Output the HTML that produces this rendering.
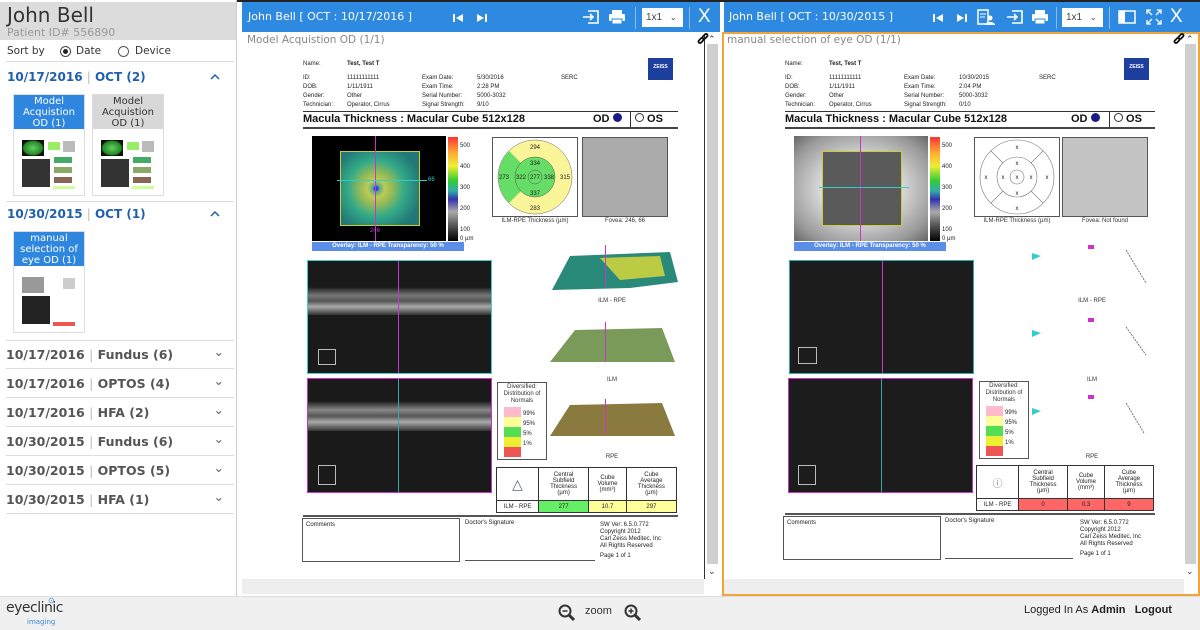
<!DOCTYPE html>
<html><head><meta charset="utf-8">
<style>
*{box-sizing:border-box;margin:0;padding:0}
body{width:1200px;height:630px;overflow:hidden;background:#fff;font-family:"Liberation Sans",sans-serif;position:relative}
.a{position:absolute}
.sb{left:0;top:0;width:237px;height:596px;border-right:1px solid #ccc;background:#fff}
.sg{font-family:"DejaVu Sans","Liberation Sans",sans-serif}
.row{position:absolute;left:6px;width:228px;height:29px;border-bottom:1px solid #ddd;font-size:12.5px;color:#555;font-weight:bold;line-height:29px}
.row .ch{position:absolute;right:10px;top:-3px;font-weight:normal;color:#666}
.th{position:absolute;width:72px;height:102px;border:1px solid #ddd;background:#fff}
.th .t{height:34px;font-size:10px;line-height:11px;text-align:center;padding-top:1px;color:#fff;background:#2e86de}
.th .t.g{background:#d8d8d8;color:#333}
.ph{top:2px;height:30px;background:#2e8ae0;color:#fff}
.rep{position:absolute;top:0;width:480px;height:596px}
.rep .x{position:absolute;font-size:6px;color:#222;white-space:nowrap;line-height:9px}
.cap{font-size:6px;color:#333;position:absolute;text-align:center}
table.tb{border-collapse:collapse;font-size:6px;text-align:center;color:#222}
table.tb td{border:1px solid #333;padding:0}
.mini{position:absolute;left:6px;top:38px;width:58px;height:60px;background:#fff}
</style></head><body>
<div class="a" style="left:0;top:0;width:1200px;height:2px;background:#222"></div>
<!-- sidebar -->
<div class="a sb">
 <div class="a" style="left:0;top:2px;width:236px;height:38px;background:#dcdcdc"></div>
 <div class="a sg" style="left:7px;top:3px;font-size:20px;color:#333">John Bell</div>
 <div class="a sg" style="left:7px;top:26px;font-size:11px;color:#999">Patient ID# 556890</div>
 <div class="a sg" style="left:7px;top:45px;font-size:10.5px;color:#333">Sort by</div>
 <div class="a" style="left:60px;top:46px;width:11px;height:11px;border:1px solid #444;border-radius:50%"><div class="a" style="left:2px;top:2px;width:5px;height:5px;background:#222;border-radius:50%"></div></div>
 <div class="a sg" style="left:76px;top:45px;font-size:10.5px;color:#333">Date</div>
 <div class="a" style="left:118px;top:46px;width:11px;height:11px;border:1px solid #555;border-radius:50%"></div>
 <div class="a sg" style="left:135px;top:45px;font-size:10.5px;color:#333">Device</div>
 <div class="a" style="left:6px;top:61px;width:228px;height:1px;background:#ddd"></div>
 <div class="a sg" style="left:7px;top:70px;font-size:12px;font-weight:bold;color:#1f5fae">10/17/2016 <span style="color:#bbb;font-weight:normal">|</span> OCT (2)</div>
 <svg class="a" style="left:210px;top:73px" width="10" height="7"><path d="M1 6l4-4 4 4" fill="none" stroke="#1f5fae" stroke-width="1.5"/></svg>
 <div class="th" style="left:13px;top:94px"><div class="t sg">Model Acquistion OD (1)</div><div class="mini"><div class="a" style="left:2px;top:7px;width:22px;height:16px;background:radial-gradient(#6c6,#282 60%,#111 70%)"></div><div class="a" style="left:28px;top:9px;width:12px;height:8px;background:#9e6"></div><div class="a" style="left:43px;top:8px;width:12px;height:11px;background:#bbb"></div><div class="a" style="left:2px;top:26px;width:28px;height:28px;background:#333"></div><div class="a" style="left:34px;top:24px;width:18px;height:6px;background:#4a6"></div><div class="a" style="left:34px;top:34px;width:18px;height:6px;background:#8a6"></div><div class="a" style="left:34px;top:44px;width:18px;height:6px;background:#865"></div><div class="a" style="left:33px;top:53px;width:22px;height:3px;background:#cf9"></div></div></div>
 <div class="th" style="left:92px;top:94px"><div class="t g sg">Model Acquistion OD (1)</div><div class="mini"><div class="a" style="left:2px;top:7px;width:22px;height:16px;background:radial-gradient(#6c6,#282 60%,#111 70%)"></div><div class="a" style="left:28px;top:9px;width:12px;height:8px;background:#9e6"></div><div class="a" style="left:43px;top:8px;width:12px;height:11px;background:#bbb"></div><div class="a" style="left:2px;top:26px;width:28px;height:28px;background:#333"></div><div class="a" style="left:34px;top:24px;width:18px;height:6px;background:#4a6"></div><div class="a" style="left:34px;top:34px;width:18px;height:6px;background:#8a6"></div><div class="a" style="left:34px;top:44px;width:18px;height:6px;background:#865"></div><div class="a" style="left:33px;top:53px;width:22px;height:3px;background:#cf9"></div></div></div>
 <div class="a" style="left:6px;top:201px;width:228px;height:1px;background:#ddd"></div>
 <div class="a sg" style="left:7px;top:207px;font-size:12px;font-weight:bold;color:#1f5fae">10/30/2015 <span style="color:#bbb;font-weight:normal">|</span> OCT (1)</div>
 <svg class="a" style="left:210px;top:210px" width="10" height="7"><path d="M1 6l4-4 4 4" fill="none" stroke="#1f5fae" stroke-width="1.5"/></svg>
 <div class="th" style="left:13px;top:231px"><div class="t sg">manual selection of eye OD (1)</div><div class="mini"><div class="a" style="left:2px;top:7px;width:22px;height:16px;background:#999"></div><div class="a" style="left:43px;top:8px;width:12px;height:11px;background:#ccc"></div><div class="a" style="left:2px;top:26px;width:28px;height:28px;background:#222"></div><div class="a" style="left:33px;top:52px;width:22px;height:4px;background:#e55"></div></div></div>
 <div class="a" style="left:6px;top:340px;width:228px;height:1px;background:#ddd"></div>
 <div class="row sg" style="top:340px">10/17/2016 <span style="color:#bbb;font-weight:normal">|</span> Fundus (6)<span class="ch">&#8964;</span></div>
 <div class="row sg" style="top:369px">10/17/2016 <span style="color:#bbb;font-weight:normal">|</span> OPTOS (4)<span class="ch">&#8964;</span></div>
 <div class="row sg" style="top:398px">10/17/2016 <span style="color:#bbb;font-weight:normal">|</span> HFA (2)<span class="ch">&#8964;</span></div>
 <div class="row sg" style="top:427px">10/30/2015 <span style="color:#bbb;font-weight:normal">|</span> Fundus (6)<span class="ch">&#8964;</span></div>
 <div class="row sg" style="top:456px">10/30/2015 <span style="color:#bbb;font-weight:normal">|</span> OPTOS (5)<span class="ch">&#8964;</span></div>
 <div class="row sg" style="top:485px">10/30/2015 <span style="color:#bbb;font-weight:normal">|</span> HFA (1)<span class="ch">&#8964;</span></div>
</div>

<!-- left panel header -->
<div class="a ph" style="left:242px;width:478px">
 <div class="a sg" style="left:6px;top:8px;font-size:11px">John Bell [ OCT : 10/17/2016 ]</div>
 <svg class="a" style="left:210px;top:11px" width="12" height="10"><rect x="1" y="1" width="2" height="8" fill="#fff"/><path d="M11 1L4 5l7 4z" fill="#fff"/></svg>
 <svg class="a" style="left:234px;top:11px" width="12" height="10"><path d="M1 1l7 4-7 4z" fill="#fff"/><rect x="9" y="1" width="2" height="8" fill="#fff"/></svg>
 <svg class="a" style="left:340px;top:7px" width="18" height="16"><path d="M6 2h10v12H6M1 8h10M8 5l3 3-3 3" fill="none" stroke="#fff" stroke-width="1.6"/></svg>
 <svg class="a" style="left:366px;top:7px" width="18" height="16"><rect x="4" y="1" width="10" height="4" fill="#fff"/><rect x="1" y="5" width="16" height="7" rx="1" fill="#fff"/><rect x="4" y="10" width="10" height="5" fill="#fff" stroke="#2e8ae0"/></svg>
 <div class="a" style="left:393px;top:5px;width:1px;height:22px;background:#8bbcec"></div>
 <div class="a" style="left:400px;top:6px;width:41px;height:19px;background:#fff;color:#444;font-size:10px;line-height:19px;padding-left:4px">1x1 <span style="font-size:8px;margin-left:5px">&#8964;</span></div>
 <div class="a" style="left:447px;top:5px;width:1px;height:22px;background:#8bbcec"></div>
 <div class="a" style="left:456px;top:4px;font-size:19px">X</div>
</div>
<!-- right panel header -->
<div class="a ph" style="left:724px;width:476px">
 <div class="a sg" style="left:5px;top:8px;font-size:11px">John Bell [ OCT : 10/30/2015 ]</div>
 <svg class="a" style="left:208px;top:11px" width="12" height="10"><rect x="1" y="1" width="2" height="8" fill="#fff"/><path d="M11 1L4 5l7 4z" fill="#fff"/></svg>
 <svg class="a" style="left:232px;top:11px" width="12" height="10"><path d="M1 1l7 4-7 4z" fill="#fff"/><rect x="9" y="1" width="2" height="8" fill="#fff"/></svg>
 <svg class="a" style="left:253px;top:7px" width="18" height="17"><path d="M1 1h10v14H1z" fill="none" stroke="#fff" stroke-width="1.5"/><path d="M3 5h6M3 8h5" stroke="#fff"/><circle cx="13" cy="9" r="2.5" fill="#fff"/><path d="M8 16c0-4 10-4 10 0z" fill="#fff"/></svg>
 <svg class="a" style="left:282px;top:7px" width="18" height="16"><path d="M6 2h10v12H6M1 8h10M8 5l3 3-3 3" fill="none" stroke="#fff" stroke-width="1.6"/></svg>
 <svg class="a" style="left:307px;top:7px" width="18" height="16"><rect x="4" y="1" width="10" height="4" fill="#fff"/><rect x="1" y="5" width="16" height="7" rx="1" fill="#fff"/><rect x="4" y="10" width="10" height="5" fill="#fff" stroke="#2e8ae0"/></svg>
 <div class="a" style="left:332px;top:5px;width:1px;height:22px;background:#8bbcec"></div>
 <div class="a" style="left:338px;top:6px;width:41px;height:19px;background:#fff;color:#444;font-size:10px;line-height:19px;padding-left:4px">1x1 <span style="font-size:8px;margin-left:5px">&#8964;</span></div>
 <div class="a" style="left:385px;top:5px;width:1px;height:22px;background:#8bbcec"></div>
 <svg class="a" style="left:394px;top:7px" width="18" height="16"><rect x="1" y="2" width="16" height="12" fill="none" stroke="#fff" stroke-width="1.5"/><rect x="1" y="2" width="6" height="12" fill="#fff"/></svg>
 <svg class="a" style="left:421px;top:6px" width="18" height="18"><path d="M2 6V2h4M12 2h4v4M16 12v4h-4M6 16H2v-4M2 2l5 5M16 2l-5 5M16 16l-5-5M2 16l5-5" fill="none" stroke="#fff" stroke-width="1.3"/></svg>
 <div class="a" style="left:446px;top:4px;font-size:19px">X</div>
</div>

<!-- left panel body -->
<div class="a" style="left:242px;top:32px;width:478px;height:564px;background:#fff"></div>
<div class="a sg" style="left:247px;top:34px;font-size:10.5px;color:#888">Model Acquistion OD (1/1)</div>
<div class="a" style="left:704px;top:34px;width:1px;height:545px;background:#333"></div>
<div class="a" style="left:707px;top:44px;width:11px;height:520px;background:#cfcfcf"></div>
<div class="a" style="left:708px;top:34px;font-size:9px;color:#333">&#8963;</div>
<div class="a" style="left:708px;top:566px;font-size:9px;color:#333">&#8964;</div>
<div class="a" style="left:242px;top:579px;width:462px;height:15px;background:#eee"></div>
<svg class="a" style="left:697px;top:33px" width="12" height="12"><g fill="none" stroke="#111" stroke-width="1.8"><rect x="1" y="6" width="6" height="3" rx="1.5" transform="rotate(-45 4 7.5)"/><rect x="5" y="2" width="6" height="3" rx="1.5" transform="rotate(-45 8 3.5)"/></g></svg>
<!-- right panel body -->
<div class="a" style="left:722px;top:32px;width:478px;height:564px;border:2px solid #f2a33a;background:#fff"></div>
<div class="a sg" style="left:727px;top:34px;font-size:10.5px;color:#888">manual selection of eye OD (1/1)</div>
<div class="a" style="left:1185px;top:44px;width:11px;height:520px;background:#cfcfcf"></div>
<div class="a" style="left:1186px;top:34px;font-size:9px;color:#333">&#8963;</div>
<div class="a" style="left:1186px;top:566px;font-size:9px;color:#333">&#8964;</div>
<div class="a" style="left:724px;top:579px;width:460px;height:15px;background:#eee"></div>
<svg class="a" style="left:1173px;top:33px" width="12" height="12"><g fill="none" stroke="#111" stroke-width="1.8"><rect x="1" y="6" width="6" height="3" rx="1.5" transform="rotate(-45 4 7.5)"/><rect x="5" y="2" width="6" height="3" rx="1.5" transform="rotate(-45 8 3.5)"/></g></svg>

<!-- left report -->
<div class="rep" style="left:242px">
 <div class="x" style="left:61px;top:60px">Name:</div><div class="x" style="left:105px;top:60px;font-weight:bold">Test, Test T</div>
 <div class="x" style="left:61px;top:74px">ID:<br>DOB:<br>Gender:<br>Technician:</div>
 <div class="x" style="left:105px;top:74px">11111111111<br>1/11/1911<br>Other<br>Operator, Cirrus</div>
 <div class="x" style="left:180px;top:74px">Exam Date:<br>Exam Time:<br>Serial Number:<br>Signal Strength:</div>
 <div class="x" style="left:235px;top:74px">5/30/2016<br>2:28 PM<br>5000-3032<br>9/10</div>
 <div class="x" style="left:319px;top:74px">SERC</div>
 <div class="a" style="left:406px;top:58px;width:25px;height:22px;background:#1d3f9e;color:#fff;font-size:5px;font-weight:bold;text-align:center;line-height:18px">ZEISS</div>
 <div class="a" style="left:61px;top:111px;width:375px;height:1px;background:#333"></div>
 <div class="a" style="left:61px;top:113px;font-size:11px;font-weight:bold;color:#111">Macula Thickness : Macular Cube 512x128</div>
 <div class="a" style="left:351px;top:113px;font-size:11px;font-weight:bold;color:#111">OD <span style="display:inline-block;width:9px;height:9px;border-radius:50%;background:#1a1a8a"></span></div>
 <div class="a" style="left:388px;top:112px;width:1px;height:15px;background:#333"></div>
 <div class="a" style="left:393px;top:113px;font-size:11px;font-weight:bold;color:#111"><span style="display:inline-block;width:9px;height:9px;border-radius:50%;border:1px solid #333"></span> OS</div>
 <div class="a" style="left:61px;top:127px;width:375px;height:2px;background:#444"></div>
 <div class="a" style="left:70px;top:136px;width:134px;height:105px;background:#000"><div class="a" style="left:28px;top:15px;width:80px;height:75px;border:1px solid #cc3;background:radial-gradient(circle at 45% 50%,#33f 3%,#5a8 6%,#bc5 15%,#9b5 28%,#3a8 50%,#277 80%)"></div><div class="a" style="left:63px;top:0;width:1px;height:105px;background:#c3c"></div><div class="a" style="left:25px;top:44px;width:90px;height:1px;background:#3cc"></div><div class="a" style="left:58px;top:92px;font-size:6px;color:#c3c">246</div><div class="a" style="left:116px;top:41px;font-size:6px;color:#3cc">66</div></div>
 <div class="a" style="left:206px;top:137px;width:10px;height:104px;background:linear-gradient(#f33,#fa3 15%,#ee3 28%,#3c3 42%,#3aa 52%,#33a 60%,#aaa 72%,#555 85%,#000)"></div>
 <div class="x" style="left:218px;top:136px;line-height:21px">500<br>400<br>300<br>200<br>100</div><div class="x" style="left:218px;top:235px">0 µm</div>
 <div class="a" style="left:70px;top:242px;width:152px;height:9px;background:#5b8ee6;color:#fff;font-size:6px;font-weight:bold;text-align:center;line-height:9px">Overlay: ILM - RPE  Transparency: 50 %</div>
 <svg class="a" style="left:250px;top:137px" width="86" height="80"><rect x=".5" y=".5" width="85" height="79" fill="#fff" stroke="#555"/><circle cx="43" cy="40" r="37" fill="#fbf59a" stroke="#666" stroke-width=".5"/><path d="M43 40L17 14A37 37 0 0 0 17 66z" fill="#6d6"/><circle cx="43" cy="40" r="20" fill="#6d6" stroke="#555" stroke-width=".5"/><circle cx="43" cy="40" r="7" fill="#6d6" stroke="#555" stroke-width=".5"/><g font-size="6" text-anchor="middle" fill="#222" font-family="Liberation Sans"><text x="43" y="12">294</text><text x="43" y="28">334</text><text x="43" y="42">277</text><text x="29" y="42">322</text><text x="57" y="42">338</text><text x="12" y="42">273</text><text x="73" y="42">315</text><text x="43" y="58">337</text><text x="43" y="73">283</text></g></svg>
 <div class="cap" style="left:250px;top:218px;width:86px">ILM-RPE Thickness (µm)</div>
 <div class="a" style="left:340px;top:137px;width:86px;height:80px;border:1px solid #555;background:#aaa"></div>
 <div class="cap" style="left:340px;top:218px;width:86px">Fovea: 246, 66</div>
 <div class="a" style="left:65px;top:260px;width:185px;height:114px;border:1px solid #4cc;background:#1a1a1a"><div class="a" style="left:0;top:26px;width:183px;height:28px;background:linear-gradient(#1a1a1a,#777 30%,#555 50%,#aaa 70%,#333)"></div><div class="a" style="left:90px;top:0;width:1px;height:112px;background:#c3c"></div><div class="a" style="left:10px;top:88px;width:18px;height:16px;border:1px solid #bbb"></div></div>
 <div class="a" style="left:65px;top:378px;width:185px;height:115px;border:1px solid #c3c;background:#1a1a1a"><div class="a" style="left:0;top:22px;width:183px;height:30px;background:linear-gradient(#1a1a1a,#888 30%,#555 50%,#aaa 70%,#333)"></div><div class="a" style="left:90px;top:0;width:1px;height:113px;background:#3aa"></div><div class="a" style="left:10px;top:86px;width:18px;height:20px;border:1px solid #bbb"></div></div>
 <svg class="a" style="left:308px;top:242px" width="130" height="210"><polygon points="20,14 120,10 128,40 80,46 2,48" fill="#2a8a7a"/><polygon points="50,16 110,14 115,34 70,38" fill="#bc4"/><polygon points="25,88 112,86 125,120 60,120 0,120" fill="#7a9a5a"/><polygon points="20,163 112,161 125,194 60,194 0,194" fill="#8a7a40"/><rect x="55" y="3" width="1" height="42" fill="#c3c"/><rect x="55" y="80" width="1" height="40" fill="#c3c"/><rect x="55" y="157" width="1" height="35" fill="#c3c"/></svg>
 <div class="cap" style="left:340px;top:298px;width:60px">ILM - RPE</div>
 <div class="cap" style="left:340px;top:377px;width:60px">ILM</div>
 <div class="cap" style="left:340px;top:454px;width:60px">RPE</div>
 <div class="a" style="left:255px;top:382px;width:50px;height:78px;border:1px solid #555"><div class="cap" style="left:0;top:1px;width:48px;line-height:7px">Diversified: Distribution of Normals</div><div class="a" style="left:6px;top:24px;width:17px;height:50px;background:linear-gradient(#fbc 20%,#ff9 20%,#ff9 40%,#5d5 40%,#5d5 60%,#ee3 60%,#ee3 80%,#e55 80%)"></div><div class="x" style="left:25px;top:26px;line-height:10px">99%<br>95%<br>5%<br>1%</div></div>
 <table class="tb a" style="left:254px;top:467px;width:181px;height:46px"><tr style="height:33px"><td style="width:42px;font-size:14px;color:#568">&#9651;</td><td>Central<br>Subfield<br>Thickness<br>(µm)</td><td>Cube<br>Volume<br>(mm³)</td><td>Cube<br>Average<br>Thickness<br>(µm)</td></tr><tr><td>ILM - RPE</td><td style="background:#6e6">277</td><td style="background:#ff9">10.7</td><td style="background:#ff9">297</td></tr></table>
 <div class="a" style="left:61px;top:515px;width:375px;height:2px;background:#555"></div>
 <div class="a" style="left:60px;top:518px;width:158px;height:44px;border:1px solid #555"><div class="x" style="left:3px;top:2px">Comments</div></div>
 <div class="x" style="left:223px;top:519px">Doctor's Signature</div>
 <div class="a" style="left:223px;top:560px;width:130px;height:1px;background:#555"></div>
 <div class="x" style="left:358px;top:522px;line-height:7px">SW Ver: 6.5.0.772<br>Copyright 2012<br>Carl Zeiss Meditec, Inc<br>All Rights Reserved</div>
 <div class="x" style="left:358px;top:552px">Page 1 of 1</div>
</div>

<!-- right report -->
<div class="rep" style="left:724px">
 <div class="x" style="left:61px;top:60px">Name:</div><div class="x" style="left:105px;top:60px;font-weight:bold">Test, Test T</div>
 <div class="x" style="left:61px;top:74px">ID:<br>DOB:<br>Gender:<br>Technician:</div>
 <div class="x" style="left:105px;top:74px">11111111111<br>1/11/1911<br>Other<br>Operator, Cirrus</div>
 <div class="x" style="left:180px;top:74px">Exam Date:<br>Exam Time:<br>Serial Number:<br>Signal Strength:</div>
 <div class="x" style="left:235px;top:74px">10/30/2015<br>2:04 PM<br>5000-3032<br>0/10</div>
 <div class="x" style="left:315px;top:74px">SERC</div>
 <div class="a" style="left:400px;top:58px;width:25px;height:22px;background:#1d3f9e;color:#fff;font-size:5px;font-weight:bold;text-align:center;line-height:18px">ZEISS</div>
 <div class="a" style="left:61px;top:111px;width:370px;height:1px;background:#333"></div>
 <div class="a" style="left:61px;top:113px;font-size:11px;font-weight:bold;color:#111">Macula Thickness : Macular Cube 512x128</div>
 <div class="a" style="left:347px;top:113px;font-size:11px;font-weight:bold;color:#111">OD <span style="display:inline-block;width:9px;height:9px;border-radius:50%;background:#1a1a8a"></span></div>
 <div class="a" style="left:385px;top:112px;width:1px;height:15px;background:#333"></div>
 <div class="a" style="left:390px;top:113px;font-size:11px;font-weight:bold;color:#111"><span style="display:inline-block;width:9px;height:9px;border-radius:50%;border:1px solid #333"></span> OS</div>
 <div class="a" style="left:61px;top:127px;width:370px;height:2px;background:#444"></div>
 <div class="a" style="left:70px;top:136px;width:134px;height:105px;background:radial-gradient(ellipse,#ddd 40%,#999 80%,#666)"><div class="a" style="left:28px;top:15px;width:80px;height:75px;border:1px solid #cc3;background:#5a5a5a"></div><div class="a" style="left:66px;top:0;width:1px;height:105px;background:#c3c"></div><div class="a" style="left:25px;top:51px;width:90px;height:1px;background:#3cc"></div></div>
 <div class="a" style="left:206px;top:137px;width:10px;height:104px;background:linear-gradient(#f33,#fa3 15%,#ee3 28%,#3c3 42%,#3aa 52%,#33a 60%,#aaa 72%,#555 85%,#000)"></div>
 <div class="x" style="left:218px;top:136px;line-height:21px">500<br>400<br>300<br>200<br>100</div><div class="x" style="left:218px;top:235px">0 µm</div>
 <div class="a" style="left:70px;top:242px;width:152px;height:9px;background:#5b8ee6;color:#fff;font-size:6px;font-weight:bold;text-align:center;line-height:9px">Overlay: ILM - RPE  Transparency: 50 %</div>
 <svg class="a" style="left:250px;top:137px" width="86" height="80"><rect x=".5" y=".5" width="85" height="79" fill="#fff" stroke="#555"/><circle cx="43" cy="40" r="37" fill="none" stroke="#777" stroke-width=".6"/><circle cx="43" cy="40" r="20" fill="none" stroke="#777" stroke-width=".6"/><circle cx="43" cy="40" r="7" fill="none" stroke="#777" stroke-width=".6"/><path d="M17 14L29 26M69 14L57 26M17 66L29 54M69 66L57 54" stroke="#777" stroke-width=".6"/><g font-size="6" text-anchor="middle" fill="#222" font-family="Liberation Sans"><text x="43" y="12">x</text><text x="43" y="28">x</text><text x="43" y="42">x</text><text x="29" y="42">x</text><text x="57" y="42">x</text><text x="12" y="42">x</text><text x="73" y="42">x</text><text x="43" y="58">x</text><text x="43" y="73">x</text></g></svg>
 <div class="cap" style="left:250px;top:218px;width:86px">ILM-RPE Thickness (µm)</div>
 <div class="a" style="left:338px;top:137px;width:86px;height:80px;border:1px solid #555;background:#c4c4c4"></div>
 <div class="cap" style="left:338px;top:218px;width:86px">Fovea: Not found</div>
 <div class="a" style="left:65px;top:260px;width:185px;height:114px;border:1px solid #3aa;background:#1c1c1c"><div class="a" style="left:92px;top:0;width:1px;height:112px;background:#c3c"></div><div class="a" style="left:8px;top:86px;width:19px;height:17px;border:1px solid #bbb"></div></div>
 <div class="a" style="left:64px;top:378px;width:185px;height:115px;border:1px solid #c3c;background:#1c1c1c"><div class="a" style="left:92px;top:0;width:1px;height:113px;background:#3aa"></div><div class="a" style="left:9px;top:86px;width:18px;height:20px;border:1px solid #bbb"></div></div>
 <svg class="a" style="left:300px;top:245px" width="140" height="200"><g fill="#3cc"><polygon points="8,8 17,11 8,15"/><polygon points="8,85 17,88 8,92"/><polygon points="8,163 17,166 8,170"/></g><g fill="#c3c"><rect x="64" y="0" width="6" height="4"/><rect x="64" y="73" width="6" height="4"/><rect x="64" y="150" width="6" height="4"/></g><g stroke="#555" stroke-width=".8" stroke-dasharray="2 1"><path d="M102 5L122 38M102 82L122 110M102 158L120 188"/></g></svg>
 <div class="cap" style="left:338px;top:298px;width:60px">ILM - RPE</div>
 <div class="cap" style="left:338px;top:377px;width:60px">ILM</div>
 <div class="cap" style="left:338px;top:454px;width:60px">RPE</div>
 <div class="a" style="left:255px;top:381px;width:50px;height:78px;border:1px solid #555"><div class="cap" style="left:0;top:1px;width:48px;line-height:7px">Diversified: Distribution of Normals</div><div class="a" style="left:6px;top:24px;width:17px;height:50px;background:linear-gradient(#fbc 20%,#ff9 20%,#ff9 40%,#5d5 40%,#5d5 60%,#ee3 60%,#ee3 80%,#e55 80%)"></div><div class="x" style="left:25px;top:26px;line-height:10px">99%<br>95%<br>5%<br>1%</div></div>
 <table class="tb a" style="left:252px;top:465px;width:178px;height:46px"><tr style="height:33px"><td style="width:42px;font-size:10px;color:#777">&#9432;</td><td>Central<br>Subfield<br>Thickness<br>(µm)</td><td>Cube<br>Volume<br>(mm³)</td><td>Cube<br>Average<br>Thickness<br>(µm)</td></tr><tr><td>ILM - RPE</td><td style="background:#f66">0</td><td style="background:#f66">0.3</td><td style="background:#f66">9</td></tr></table>
 <div class="a" style="left:61px;top:513px;width:370px;height:2px;background:#555"></div>
 <div class="a" style="left:59px;top:516px;width:158px;height:44px;border:1px solid #555"><div class="x" style="left:3px;top:2px">Comments</div></div>
 <div class="x" style="left:221px;top:517px">Doctor's Signature</div>
 <div class="a" style="left:221px;top:558px;width:128px;height:1px;background:#555"></div>
 <div class="x" style="left:356px;top:520px;line-height:7px">SW Ver: 6.5.0.772<br>Copyright 2012<br>Carl Zeiss Meditec, Inc<br>All Rights Reserved</div>
 <div class="x" style="left:356px;top:550px">Page 1 of 1</div>
</div>

<!-- footer -->
<div class="a" style="left:0;top:596px;width:1200px;height:34px;background:#f0f0f0;border-top:1px solid #ddd"></div>
<div class="a sg" style="left:6px;top:600px;font-size:14px;color:#333;letter-spacing:-.5px">eyeclinic</div>
<div class="a sg" style="left:27px;top:618px;font-size:7px;color:#3a8ad6">imaging</div>
<div class="a" style="left:48px;top:596px;font-size:8px;color:#3a8ad6">&#8857;</div>
<svg class="a" style="left:558px;top:604px" width="18" height="18"><circle cx="7" cy="7" r="5.5" fill="none" stroke="#333" stroke-width="2"/><path d="M11 11l5 5" stroke="#333" stroke-width="3"/><path d="M4.5 7h5" stroke="#333" stroke-width="1.5"/></svg>
<div class="a" style="left:585px;top:605px;font-size:11px;color:#333">zoom</div>
<svg class="a" style="left:624px;top:604px" width="18" height="18"><circle cx="7" cy="7" r="5.5" fill="none" stroke="#333" stroke-width="2"/><path d="M11 11l5 5" stroke="#333" stroke-width="3"/><path d="M4.5 7h5M7 4.5v5" stroke="#333" stroke-width="1.5"/></svg>
<div class="a" style="left:1024px;top:604px;font-size:11px;color:#222">Logged In As <b>Admin</b> &nbsp; <b>Logout</b></div>
</body></html>
